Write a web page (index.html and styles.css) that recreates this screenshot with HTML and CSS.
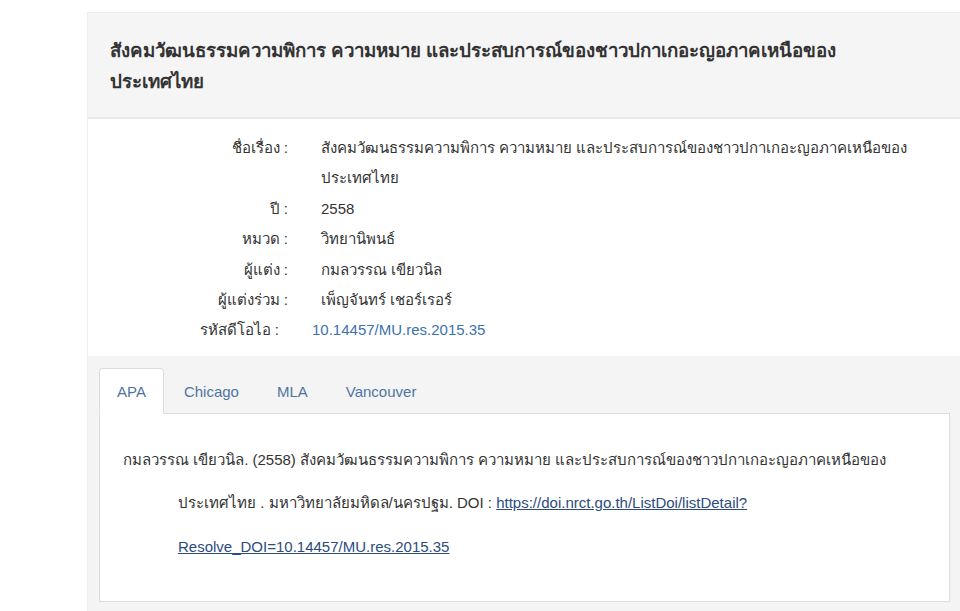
FILE: index.html
```html
<!DOCTYPE html>
<html lang="th">
<head>
    <meta charset="UTF-8">
    <meta name="viewport" content="width=device-width, initial-scale=1.0">
    <title>สังคมวัฒนธรรมความพิการ</title>
    <link rel="stylesheet" href="styles.css">
</head>
<body>

    <div class="panel">
        <div class="panel-heading">
            <h3 class="panel-title">สังคมวัฒนธรรมความพิการ ความหมาย และประสบการณ์ของชาวปกาเกอะญอภาคเหนือของประเทศไทย</h3>
        </div>

        <div class="panel-body">
            <div class="detail-row">
                <div class="detail-label">ชื่อเรื่อง :</div>
                <div class="detail-value">สังคมวัฒนธรรมความพิการ ความหมาย และประสบการณ์ของชาวปกาเกอะญอภาคเหนือของประเทศไทย</div>
            </div>
            <div class="detail-row">
                <div class="detail-label">ปี :</div>
                <div class="detail-value">2558</div>
            </div>
            <div class="detail-row">
                <div class="detail-label">หมวด :</div>
                <div class="detail-value">วิทยานิพนธ์</div>
            </div>
            <div class="detail-row">
                <div class="detail-label">ผู้แต่ง :</div>
                <div class="detail-value">กมลวรรณ เขียวนิล</div>
            </div>
            <div class="detail-row">
                <div class="detail-label">ผู้แต่งร่วม :</div>
                <div class="detail-value">เพ็ญจันทร์ เชอร์เรอร์</div>
            </div>
            <div class="detail-row detail-row-doi">
                <div class="detail-label">รหัสดีโอไอ :</div>
                <div class="detail-value"><a href="#" class="doi-link">10.14457/MU.res.2015.35</a></div>
            </div>
        </div>

        <div class="cite-section">
            <ul class="nav-tabs">
                <li class="active"><a href="#">APA</a></li>
                <li><a href="#">Chicago</a></li>
                <li><a href="#">MLA</a></li>
                <li><a href="#">Vancouver</a></li>
            </ul>
            <div class="tab-content">
                <p class="citation">กมลวรรณ เขียวนิล. (2558) สังคมวัฒนธรรมความพิการ ความหมาย และประสบการณ์ของชาวปกาเกอะญอภาคเหนือของประเทศไทย . มหาวิทยาลัยมหิดล/นครปฐม. DOI : <a href="#">https://doi.nrct.go.th/ListDoi/listDetail?Resolve_DOI=10.14457/MU.res.2015.35</a></p>
            </div>
        </div>
    </div>

</body>
</html>
```

FILE: styles.css
```css
* {
    box-sizing: border-box;
    margin: 0;
    padding: 0;
}

body {
    font-family: 'Liberation Sans', Arial, sans-serif;
    font-size: 15px;
    color: #333;
    background-color: #fff;
    overflow: hidden;
}

.panel {
    width: 880px;
    margin: 12px 0 0 87px;
    border: 1px solid #ececec;
    border-right: none;
}

.panel-heading {
    background-color: #f5f5f5;
    border-bottom: 2px solid #e9e9e9;
    padding: 22px 100px 20px 22px;
}

.panel-title {
    font-size: 18.7px;
    font-weight: bold;
    line-height: 31px;
    color: #333;
}

.panel-body {
    padding: 14px 0 10px 0;
}

.detail-row {
    display: grid;
    grid-template-columns: 200px 600px;
    column-gap: 33px;
    line-height: 30.4px;
}

.detail-label {
    text-align: right;
}

.detail-row-doi {
    margin-left: -9px;
}

.doi-link {
    color: #3d72ad;
    text-decoration: none;
}

.cite-section {
    background-color: #f4f4f4;
    padding: 12px 17px 9px 11px;
}

.nav-tabs {
    list-style: none;
    display: flex;
    border-bottom: 1px solid #ddd;
}

.nav-tabs li {
    margin-right: 2px;
    margin-bottom: -1px;
}

.nav-tabs a {
    display: block;
    padding: 10px 17px 8px;
    line-height: 26px;
    color: #4f74a1;
    text-decoration: none;
    border: 1px solid transparent;
    border-radius: 4px 4px 0 0;
}

.nav-tabs li.active a {
    background-color: #fff;
    border-color: #ddd #ddd transparent #ddd;
}

.tab-content {
    background-color: #fff;
    border: 1px solid #ddd;
    border-top: none;
    padding: 24px 55px 33px 23px;
}

.citation {
    line-height: 43.5px;
    padding-left: 55px;
    text-indent: -55px;
}

.citation a {
    color: #2c4c7c;
    text-decoration: underline;
}
```
